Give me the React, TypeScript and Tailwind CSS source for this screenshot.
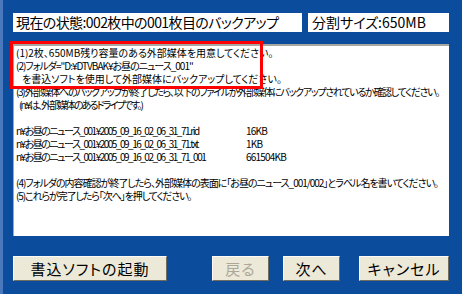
import React from "react";

const files = [
    { name: "n¥お昼のニュース_001¥2005_09_16_02_06_31_71.rid", size: "16KB" },
    { name: "n¥お昼のニュース_001¥2005_09_16_02_06_31_71.txt", size: "1KB" },
    { name: "n¥お昼のニュース_001¥2005_09_16_02_06_31_71_001", size: "661504KB" },
];

const Btn = ({ label, width, disabled }: { label: string; width: string; disabled?: boolean }) => (
    <button
        className={`${width} h-[25px] bg-[#ece9d8] border border-t-[#fbfaf6] border-l-[#fbfaf6] border-b-[#6f6c60] border-r-[#6f6c60] text-[15px] leading-none tracking-[1px] ${disabled ? "text-[#aca899]" : "text-black"}`}
    >
        {label}
    </button>
);

const App = () => {
    return (
        <div className="w-[462px] h-[294px] overflow-hidden flex flex-col bg-[#0b4c9c] border-l-[3px] border-[#4a78bd] pl-[10px] pr-[13px] pt-[13px] pb-[13px] font-['Noto_Sans_CJK_JP','Noto_Sans',sans-serif] [font-feature-settings:'palt'] text-black relative">
            <div className="flex gap-[6px] h-[19px] shrink-0">
                <div className="w-[289px] bg-white px-[3px] text-[14px] leading-[19px] tracking-[-0.6px] whitespace-nowrap">
                    現在の状態:002枚中の001枚目のバックアップ
                </div>
                <div className="flex-1 bg-white px-[4px] text-[14px] leading-[19px] whitespace-nowrap">
                    分割サイズ:650MB
                </div>
            </div>

            <div className="mt-[12px] flex-1 min-h-0 overflow-hidden bg-white border-t-2 border-l border-[#a7a6a0] pl-[2px] text-[10px] leading-[13px] whitespace-nowrap">
                <div>(1)2枚、650MB残り容量のある外部媒体を用意してください。</div>
                <div className="tracking-[-1px]">(2)フォルダ="D:¥DTVBAK¥お昼のニュース_001"</div>
                <div className="pl-[6px]">を書込ソフトを使用して外部媒体にバックアップしてください。</div>
                <div className="tracking-[-1.3px]">(3)外部媒体へのバックアップが終了したら、以下のファイルが外部媒体にバックアップされているか確認してください。</div>
                <div className="pl-[3px] tracking-[-1.8px]">(n:¥は、外部媒体のあるドライブです。)</div>
                <div className="h-[13px]" />
                {files.map((f) => (
                    <div key={f.size} className="flex">
                        <span className="w-[230px] tracking-[-1.5px]">{f.name}</span>
                        <span className="tracking-[-0.8px]">{f.size}</span>
                    </div>
                ))}
                <div className="h-[13px]" />
                <div className="tracking-[-1px]">(4)フォルダの内容確認が終了したら、外部媒体の表面に「お昼のニュース_001/002」とラベル名を書いてください。</div>
                <div className="tracking-[-1.1px]">(5)これらが完了したら「次へ」を押してください。</div>
            </div>

            <div className="mt-[20px] h-[25px] shrink-0 flex items-center">
                <Btn label="書込ソフトの起動" width="w-[154px]" />
                <div className="w-[45px]" />
                <Btn label="戻る" width="w-[57px]" disabled />
                <div className="w-[14px]" />
                <Btn label="次へ" width="w-[57px]" />
                <div className="w-[19px]" />
                <Btn label="キャンセル" width="w-[90px]" />
            </div>

            <div className="absolute left-[7px] top-[41px] w-[253px] h-[48px] border-[3px] border-[#ff0000]" />
        </div>
    );
};

export default App;
